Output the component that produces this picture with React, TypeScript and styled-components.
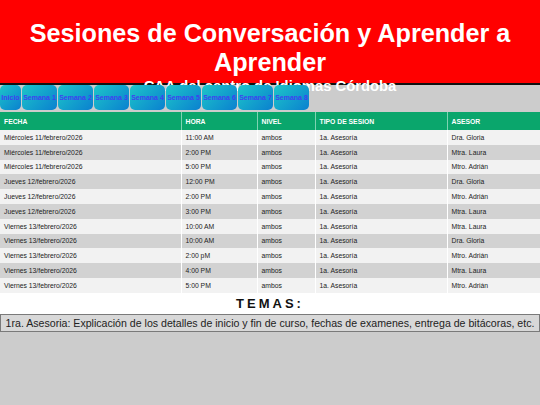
import React from "react";
import styled, { createGlobalStyle } from "styled-components";

const Global = createGlobalStyle`
  html, body { margin: 0; padding: 0; background: #cccccc; }
  body { font-family: "Liberation Sans", Arial, sans-serif; }
`;

const Header = styled.header`
  height: 85px;
  box-sizing: border-box;
  background: #ff0000;
  border-bottom: 2px solid #111;
  text-align: center;
  color: #fff;
  padding-top: 19px;
`;

const Title = styled.h1`
  margin: 0;
  font-size: 25.2px;
  line-height: 29px;
  font-weight: bold;
`;

const Subtitle = styled.h2`
  margin: 0;
  padding-top: 1px;
  font-size: 14.8px;
  line-height: 17px;
  font-weight: bold;
`;

const Nav = styled.nav`
  position: relative;
  display: flex;
  gap: 1px;
  height: 27px;
`;

const Tab = styled.a<{ $w: number }>`
  width: ${(p) => p.$w}px;
  height: 25px;
  box-sizing: border-box;
  border-radius: 5px;
  background: linear-gradient(135deg, #1dc6c8 0%, #0a80d0 100%);
  color: #4040f0;
  font-size: 7px;
  font-weight: bold;
  display: flex;
  align-items: center;
  justify-content: center;
  text-decoration: none;
  white-space: nowrap;
`;

const Content = styled.section`
  background: #fff;
`;

const Table = styled.table`
  width: 100%;
  table-layout: fixed;
  border-collapse: collapse;
  font-size: 6.8px;
  color: #222;
`;

const Th = styled.th`
  background: #0aa66c;
  color: #fff;
  text-align: left;
  font-weight: bold;
  height: 18px;
  padding: 0 4px;
  border-left: 1px solid #7fd3b2;
  &:first-child { border-left: none; }
`;

const Tr = styled.tr<{ $alt: boolean }>`
  background: ${(p) => (p.$alt ? "#d2d2d2" : "#f2f2f2")};
`;

const Td = styled.td`
  height: 14.8px;
  padding: 0 4px;
  border-left: 1px solid #fff;
  white-space: nowrap;
  &:first-child { border-left: none; }
`;

const TemasTitle = styled.h3`
  margin: 0;
  text-align: center;
  font-size: 13px;
  font-weight: bold;
  letter-spacing: 3px;
  line-height: 21px;
  color: #111;
`;

const Note = styled.p`
  margin: 0;
  background: #d8d8d8;
  border: 1px solid #7a7a7a;
  font-size: 10.6px;
  line-height: 16px;
  text-align: center;
  color: #222;
`;

const tabs: [string, number][] = [
  ["Inicio", 21],
  ["Semana 1", 35],
  ["Semana 2", 35],
  ["Semana 3", 35],
  ["Semana 4", 35],
  ["Semana 5", 35],
  ["Semana 6", 35],
  ["Semana 7", 35],
  ["Semana 8", 35],
];

const colWidths = [181, 76, 58, 132, 93];

const rows = [
  ["Miércoles 11/febrero/2026", "11:00 AM", "Dra. Gloria"],
  ["Miércoles 11/febrero/2026", "2:00 PM", "Mtra. Laura"],
  ["Miércoles 11/febrero/2026", "5:00 PM", "Mtro. Adrián"],
  ["Jueves 12/febrero/2026", "12:00 PM", "Dra. Gloria"],
  ["Jueves 12/febrero/2026", "2:00 PM", "Mtro. Adrián"],
  ["Jueves 12/febrero/2026", "3:00 PM", "Mtra. Laura"],
  ["Viernes 13/febrero/2026", "10:00 AM", "Mtra. Laura"],
  ["Viernes 13/febrero/2026", "10:00 AM", "Dra. Gloria"],
  ["Viernes 13/febrero/2026", "2:00 pM", "Mtro. Adrián"],
  ["Viernes 13/febrero/2026", "4:00 PM", "Mtra. Laura"],
  ["Viernes 13/febrero/2026", "5:00 PM", "Mtro. Adrián"],
];

export default function App() {
  return (
    <>
      <Global />
      <Header>
        <Title>Sesiones de Conversación y Aprender a Aprender</Title>
        <Subtitle>CAA del centro de Idiomas Córdoba</Subtitle>
      </Header>
      <Nav>
        {tabs.map(([t, w]) => (
          <Tab key={t} href="#" $w={w}>
            {t}
          </Tab>
        ))}
      </Nav>
      <Content>
        <Table>
          <colgroup>
            {colWidths.map((w, i) => (
              <col key={i} style={{ width: w }} />
            ))}
          </colgroup>
          <thead>
            <tr>
              <Th>FECHA</Th>
              <Th>HORA</Th>
              <Th>NIVEL</Th>
              <Th>TIPO DE SESION</Th>
              <Th>ASESOR</Th>
            </tr>
          </thead>
          <tbody>
            {rows.map((r, i) => (
              <Tr key={i} $alt={i % 2 === 1}>
                <Td>{r[0]}</Td>
                <Td>{r[1]}</Td>
                <Td>ambos</Td>
                <Td>1a. Asesoría</Td>
                <Td>{r[2]}</Td>
              </Tr>
            ))}
          </tbody>
        </Table>
        <TemasTitle>TEMAS:</TemasTitle>
      </Content>
      <Note>
        1ra. Asesoria: Explicación de los detalles de inicio y fin de curso, fechas de examenes, entrega de bitácoras, etc.
      </Note>
    </>
  );
}
